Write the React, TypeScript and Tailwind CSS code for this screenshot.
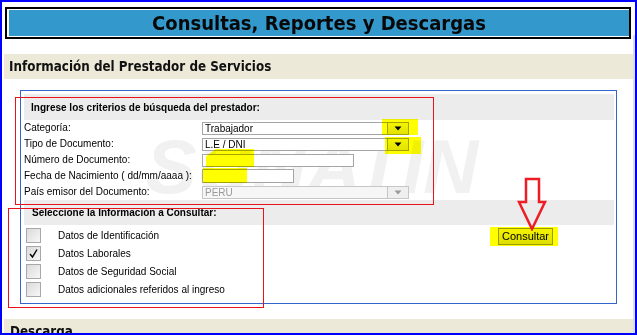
import React from "react"

const arial = { fontFamily: '"Liberation Sans", Arial, sans-serif' }
const tahoma = { fontFamily: '"DejaVu Sans Condensed", "DejaVu Sans", Tahoma, sans-serif' }

function Arrow({ gray }: { gray?: boolean }) {
  return (
    <svg width="8" height="5" viewBox="0 0 8 5">
      <polygon points="0.5,0.5 7.5,0.5 4,4.5" fill={gray ? "#9a9a9a" : "#000"} />
    </svg>
  )
}

function Select({ value, disabled }: { value: string; disabled?: boolean }) {
  return (
    <div
      className={`flex h-[13px] w-[207px] border ${
        disabled ? "border-[#c6c6c6] bg-[#f6f6f6] text-[#9a9a9a]" : "border-[#a5a5a5] bg-white text-black"
      }`}
    >
      <span className="flex-1 pl-[2px] text-[10px] leading-[11px]">{value}</span>
      <span
        className={`flex w-[21px] items-center justify-center border-l ${
          disabled ? "border-[#c6c6c6] bg-[#efefef]" : "border-[#a5a5a5] bg-gradient-to-b from-[#f4f4f4] to-[#e2e2e2]"
        }`}
      >
        <Arrow gray={disabled} />
      </span>
    </div>
  )
}

function Row({ label, children }: { label: string; children: React.ReactNode }) {
  return (
    <div className="flex h-[16px] items-center">
      <span className="w-[178px] text-[10px] leading-none">{label}</span>
      {children}
    </div>
  )
}

function Check({ label, checked }: { label: string; checked?: boolean }) {
  return (
    <div className="flex h-[18px] items-start">
      <span className="ml-[2px] flex h-[15px] w-[15px] items-center justify-center border border-[#a8a8a8] bg-gradient-to-br from-[#dadada] to-[#f7f7f7]">
        {checked && (
          <svg width="11" height="11" viewBox="0 0 11 11">
            <path d="M2 6 L4.5 9 L9 1.5" stroke="#000" strokeWidth="1.4" fill="none" />
          </svg>
        )}
      </span>
      <span className="ml-[17px] text-[10px] leading-[15px]">{label}</span>
    </div>
  )
}

export default function App() {
  return (
    <div className="relative h-[335px] w-[637px] overflow-hidden border-2 border-[#0000ff] bg-white text-black" style={arial}>
      {/* Title */}
      <div className="ml-[3px] mt-[5px] flex h-[32px] w-[626px] border-2 border-black py-[1px] pl-[2px]">
        <div className="flex flex-1 items-center justify-center bg-[#3399cc]">
          <span className="text-[20px] font-bold leading-none text-[#080808]" style={tahoma}>
            Consultas, Reportes y Descargas
          </span>
        </div>
      </div>

      {/* Section */}
      <div className="ml-[2px] mt-[15px] flex h-[25px] w-[629px] items-center bg-[#ece9d8] pl-[5px]">
        <span className="text-[13.3px] font-bold text-[#111]" style={tahoma}>
          Información del Prestador de Servicios
        </span>
      </div>

      {/* Search box */}
      <div className="relative ml-[18px] mt-[11px] h-[214px] w-[597px] border border-[#3366cc] pl-[3px] pr-[2px] pt-[3px]">
        <div
          className="pointer-events-none absolute left-[125px] top-[38px] select-none text-[76px] font-bold italic leading-none text-[#f1f1f1]"
          style={arial}
        >
          SUNATIN
        </div>

        <div className="relative">
          <div className="flex h-[26px] items-center bg-[#ececec] pl-[7px]">
            <span className="text-[10px] font-bold">Ingrese los criterios de búsqueda del prestador:</span>
          </div>

          <Row label="Categoría:">
            <Select value="Trabajador" />
          </Row>
          <Row label="Tipo de Documento:">
            <Select value="L.E / DNI" />
          </Row>
          <Row label="Número de Documento:">
            <div className="h-[13px] w-[152px] border border-[#a5a5a5] bg-white" />
          </Row>
          <Row label="Fecha de Nacimiento ( dd/mm/aaaa ):">
            <div className="h-[14px] w-[92px] border border-[#a5a5a5] bg-white" />
          </Row>
          <Row label="País emisor del Documento:">
            <Select value="PERU" disabled />
          </Row>

          <div className="flex h-[25px] items-center bg-[#ececec] pl-[8px]">
            <span className="text-[10px] font-bold">Seleccione la Información a Consultar:</span>
          </div>

          <div className="flex pt-[3px]">
            <div className="flex-1">
              <Check label="Datos de Identificación" />
              <Check label="Datos Laborales" checked />
              <Check label="Datos de Seguridad Social" />
              <Check label="Datos adicionales referidos al ingreso" />
            </div>
            <button className="mr-[61px] h-[17px] w-[55px] border border-[#9c9c9c] bg-gradient-to-b from-[#f4f4f4] to-[#dedede] text-[11px] leading-none">
              Consultar
            </button>
          </div>
        </div>
      </div>

      {/* Descarga */}
      <div className="ml-[2px] mt-[15px] flex h-[25px] w-[629px] items-center bg-[#ece9d8] pl-[6px]">
        <span className="text-[13.3px] font-bold text-[#111]" style={tahoma}>
          Descarga
        </span>
      </div>

      {/* scroll strip */}
      <div className="absolute bottom-0 right-0 top-[33px] w-[2px] bg-[#dedede]" />

      {/* annotations */}
      <div className="pointer-events-none absolute left-[13px] top-[95px] h-[108px] w-[419px] border border-[#e8141c]" />
      <div className="pointer-events-none absolute left-[6px] top-[206px] h-[100px] w-[256px] border border-[#e8141c]" />

      <div className="pointer-events-none absolute left-[380px] top-[117px] h-[16px] w-[36px] bg-[#ffff00] mix-blend-multiply" />
      <div className="pointer-events-none absolute left-[383px] top-[135px] h-[17px] w-[36px] bg-[#ffff00] mix-blend-multiply" />
      <div className="pointer-events-none absolute left-[204px] top-[147px] h-[18px] w-[48px] bg-[#ffff00] mix-blend-multiply [clip-path:polygon(20%_0,100%_0,100%_100%,0_100%,0_40%)]" />
      <div className="pointer-events-none absolute left-[201px] top-[166px] h-[15px] w-[44px] bg-[#ffff00] mix-blend-multiply" />
      <div className="pointer-events-none absolute left-[488px] top-[225px] h-[19px] w-[68px] bg-[#ffff00] mix-blend-multiply" />

      <svg className="pointer-events-none absolute left-[514px] top-[175px]" width="32" height="54" viewBox="0 0 32 54">
        <polygon points="10,2 23,2 23,25 29,25 16,52 3,25 10,25" fill="none" stroke="#ee1c24" strokeWidth="2.5" strokeLinejoin="miter" />
      </svg>
    </div>
  )
}
